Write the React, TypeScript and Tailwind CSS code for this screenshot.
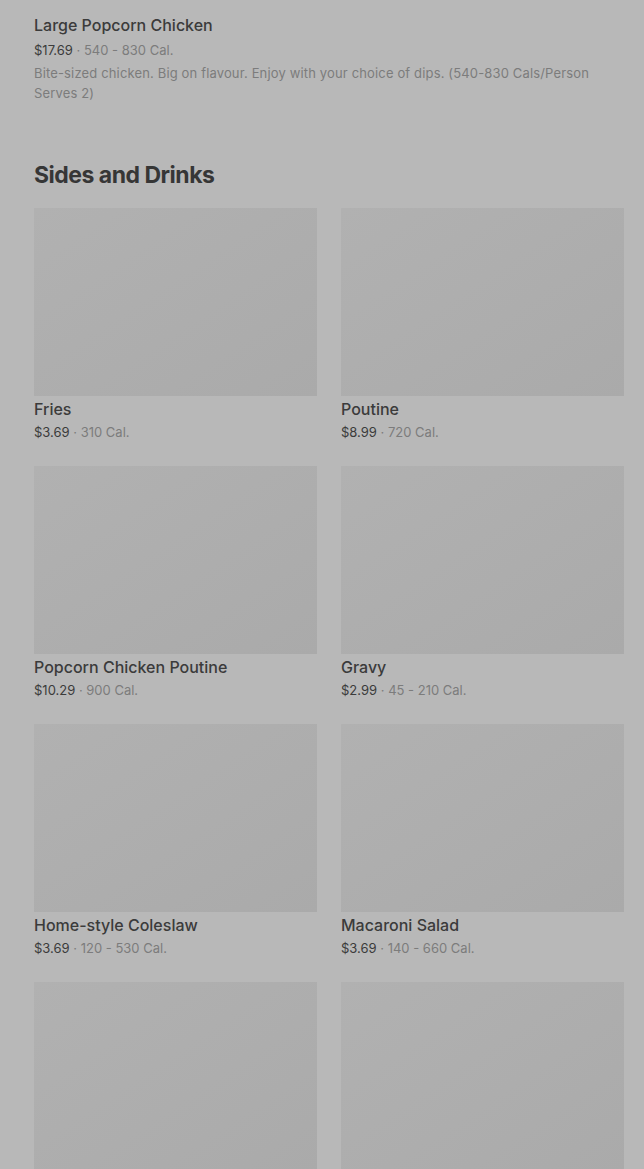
const items = [
  { name: "Fries", price: "$3.69", cal: "310 Cal." },
  { name: "Poutine", price: "$8.99", cal: "720 Cal." },
  { name: "Popcorn Chicken Poutine", price: "$10.29", cal: "900 Cal." },
  { name: "Gravy", price: "$2.99", cal: "45 - 210 Cal." },
  { name: "Home-style Coleslaw", price: "$3.69", cal: "120 - 530 Cal." },
  { name: "Macaroni Salad", price: "$3.69", cal: "140 - 660 Cal." },
  { name: "", price: "", cal: "" },
  { name: "", price: "", cal: "" },
];

export default function App() {
  return (
    <div className="h-[1169px] overflow-hidden bg-[#b8b8b8] font-['Inter',sans-serif] text-[#3b3b3b] pl-[34px] pr-[20px]">
      {/* previous item */}
      <div className="pt-[14px]">
        <h3 className="text-[16px] leading-[22px] font-medium">Large Popcorn Chicken</h3>
        <p className="mt-[3px] text-[13px] leading-[22px]">
          $17.69 <span className="text-[#7c7c7c]">· 540 - 830 Cal.</span>
        </p>
        <p className="mt-[2px] text-[13px] leading-[20px] tracking-[0.15px] text-[#7c7c7c] pr-[10px]">
          Bite-sized chicken. Big on flavour. Enjoy with your choice of dips. (540-830 Cals/Person Serves 2)
        </p>
      </div>

      {/* SECTION */}
      <h2 className="mt-[57px] text-[23px] leading-[30px] font-bold tracking-[-0.5px] text-[#363636]">
        Sides and Drinks
      </h2>
      <div className="mt-[18px] grid grid-cols-2 gap-x-[24px] gap-y-[22px]">
        {items.map((item, i) => (
          <div key={i}>
            <div className="h-[188px] bg-gradient-to-br from-[#b1b1b1] to-[#aaaaaa]" />
            {item.name && (
              <>
                <div className="text-[16px] leading-[26px] font-medium">{item.name}</div>
                <div className="text-[13px] leading-[21px] pb-[1px]">
                  {item.price} <span className="text-[#7c7c7c]">· {item.cal}</span>
                </div>
              </>
            )}
          </div>
        ))}
      </div>
    </div>
  );
}
